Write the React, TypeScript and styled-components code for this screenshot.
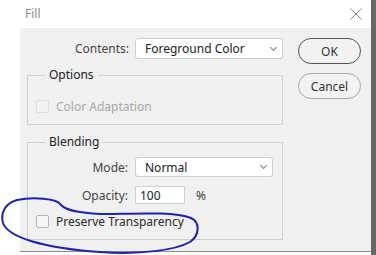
import styled, { createGlobalStyle } from 'styled-components';

const GlobalStyle = createGlobalStyle`
  html, body {
    margin: 0;
    padding: 0;
    background: #ffffff;
  }
  * {
    box-sizing: border-box;
  }
`;

type TCheck = {
  disabled?: boolean;
};

type TButton = {
  primary?: boolean;
};

type TField = {
  width: number;
  height: number;
};

export default function App() {
  return (
    <>
      <GlobalStyle />
      <Screen>
        <Main>
          <TitleBar>
            <Title>Fill</Title>
            <CloseIcon viewBox="0 0 12 12">
              <path d="M0.5 0.5 L11.5 11.5 M11.5 0.5 L0.5 11.5" />
            </CloseIcon>
          </TitleBar>
          <Body>
            <Panel>
              <LeftColumn>
                <FormRow>
                  <Label>Contents:</Label>
                  <Select width={148} height={21}>
                    <span>Foreground Color</span>
                    <Chevron />
                  </Select>
                </FormRow>

                <Group height={58} top={8}>
                  <Legend>Options</Legend>
                  <CheckRow top={15}>
                    <CheckBox disabled />
                    <CheckText disabled>Color Adaptation</CheckText>
                  </CheckRow>
                </Group>

                <Group height={106} top={9}>
                  <Legend>Blending</Legend>
                  <FieldRow top={7}>
                    <Label>Mode:</Label>
                    <Select width={138} height={20}>
                      <span>Normal</span>
                      <Chevron />
                    </Select>
                  </FieldRow>
                  <FieldRow top={9}>
                    <Label>Opacity:</Label>
                    <Input width={50} height={18}>100</Input>
                    <Percent>%</Percent>
                  </FieldRow>
                  <CheckRow top={9}>
                    <CheckBox />
                    <CheckText>Preserve Transparency</CheckText>
                  </CheckRow>
                </Group>
              </LeftColumn>

              <RightColumn>
                <Button primary>OK</Button>
                <Button>Cancel</Button>
              </RightColumn>
            </Panel>
          </Body>
        </Main>
        <ScrollEdge />

        <Marker viewBox="0 0 376 255">
          <path d="M61 205 C57 198 32 197 17 200 C6 203 0 212 3 223 C8 237 42 248 100 252 C140 255 176 250 190 242 C200 235 200 222 191 218 C172 211 130 214 100 214 C80 213 67 211 61 205" />
        </Marker>
      </Screen>
    </>
  );
}

const Screen = styled.div`
  position: relative;
  display: flex;
  width: 376px;
  height: 255px;
  overflow: hidden;
  font-family: 'Noto Sans', 'Liberation Sans', sans-serif;
  font-size: 12px;
  color: #333333;
`;

const Main = styled.div`
  display: flex;
  flex-direction: column;
  width: 371px;
`;

const TitleBar = styled.div`
  display: flex;
  align-items: center;
  justify-content: space-between;
  height: 28px;
  padding: 0 9px 2px 25px;
  background: #ffffff;
`;

const Title = styled.span`
  font-size: 12px;
  color: #8a8a8a;
`;

const CloseIcon = styled.svg`
  width: 12px;
  height: 12px;
  margin-top: 1px;
  & > path {
    fill: none;
    stroke: #8c8c8c;
    stroke-width: 1;
  }
`;

const Body = styled.div`
  height: 224px;
  padding-left: 20px;
  background: #ffffff;
`;

const Panel = styled.div`
  display: flex;
  height: 224px;
  padding: 10px 0 0 7px;
  background: #f0f0f0;
  border-bottom: 1px solid #8f8f8f;
`;

const LeftColumn = styled.div`
  display: flex;
  flex-direction: column;
  width: 256px;
`;

const RightColumn = styled.div`
  display: flex;
  flex-direction: column;
  gap: 9px;
  width: 63px;
  margin-left: 15px;
`;

const FormRow = styled.div`
  display: grid;
  grid-template-columns: 102px auto;
  column-gap: 6px;
  align-items: center;
`;

const FieldRow = styled.div<{ top: number }>`
  display: grid;
  grid-template-columns: 100px auto auto;
  column-gap: 7px;
  align-items: center;
  justify-content: start;
  margin-top: ${({ top }) => top}px;
`;

const Label = styled.span`
  text-align: right;
  color: #444444;
`;

const Select = styled.div<TField>`
  display: flex;
  align-items: center;
  justify-content: space-between;
  width: ${({ width }) => width}px;
  height: ${({ height }) => height}px;
  padding: 0 6px 0 9px;
  background: #ffffff;
  border: 1px solid #cfcfcf;
  border-radius: 3px;
  color: #222222;
`;

const Chevron = styled.i`
  width: 5px;
  height: 5px;
  margin-top: -3px;
  border-right: 1px solid #808080;
  border-bottom: 1px solid #808080;
  transform: rotate(45deg);
`;

const Input = styled.div<TField>`
  display: flex;
  align-items: center;
  width: ${({ width }) => width}px;
  height: ${({ height }) => height}px;
  padding-left: 4px;
  background: #ffffff;
  border: 1px solid #d2d2d2;
  color: #222222;
`;

const Percent = styled.span`
  margin-left: 4px;
  color: #444444;
`;

const Group = styled.fieldset<{ height: number; top: number }>`
  height: ${({ height }) => height}px;
  margin: ${({ top }) => top}px 0 0;
  padding: 0;
  border: 1px solid #d0d0d0;
`;

const Legend = styled.legend`
  margin-left: 17px;
  padding: 0 4px;
  font-size: 12px;
  line-height: 16px;
  color: #222222;
`;

const CheckRow = styled.div<{ top: number }>`
  display: flex;
  align-items: center;
  gap: 7px;
  padding-left: 8px;
  margin-top: ${({ top }) => top}px;
`;

const CheckBox = styled.span<TCheck>`
  width: 13px;
  height: 13px;
  border-radius: 2px;
  border: 1px solid ${({ disabled }) => (disabled ? '#dedede' : '#b4b4b4')};
  background: ${({ disabled }) => (disabled ? '#f3f3f3' : '#f7f7f7')};
`;

const CheckText = styled.span<TCheck>`
  color: ${({ disabled }) => (disabled ? '#a8a8a8' : '#2a2a2a')};
`;

const Button = styled.div<TButton>`
  display: flex;
  align-items: center;
  justify-content: center;
  height: 26px;
  border-radius: 13px;
  border: 1px solid ${({ primary }) => (primary ? '#555555' : '#a9a9a9')};
  background: #f2f2f2;
  font-size: 12px;
  color: #333333;
`;

const ScrollEdge = styled.div`
  width: 5px;
  background: #676767;
`;

const Marker = styled.svg`
  position: absolute;
  left: 0;
  top: 0;
  width: 376px;
  height: 255px;
  pointer-events: none;
  & > path {
    fill: none;
    stroke: #1c22b4;
    stroke-width: 2;
    stroke-linecap: round;
  }
`;
